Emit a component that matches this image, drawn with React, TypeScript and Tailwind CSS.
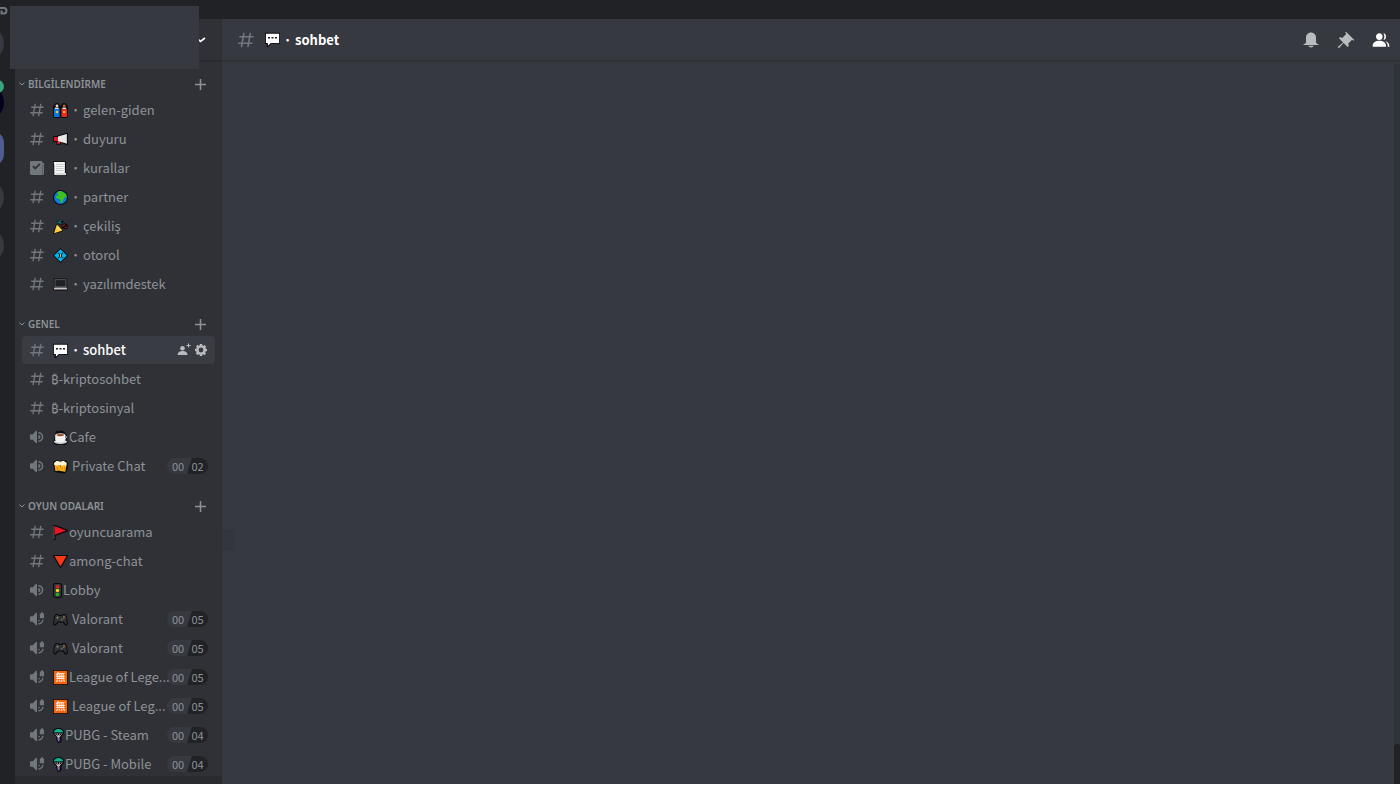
import type { ReactNode } from "react";

type EmojiName =
  | "people"
  | "megaphone"
  | "scroll"
  | "globe"
  | "party"
  | "diamond"
  | "laptop"
  | "speech"
  | "coffee"
  | "beer"
  | "flag"
  | "triangle"
  | "traffic"
  | "gamepad"
  | "kanji"
  | "parachute";

type Channel = {
  kind: "text" | "rules" | "voice" | "locked";
  emoji?: EmojiName;
  dot?: boolean;
  label: string;
  limit?: [string, string];
  active?: boolean;
};

type Category = {
  title: string;
  channels: Channel[];
};

const categories: Category[] = [
  {
    title: "BİLGİLENDİRME",
    channels: [
      { kind: "text", emoji: "people", dot: true, label: "gelen-giden" },
      { kind: "text", emoji: "megaphone", dot: true, label: "duyuru" },
      { kind: "rules", emoji: "scroll", dot: true, label: "kurallar" },
      { kind: "text", emoji: "globe", dot: true, label: "partner" },
      { kind: "text", emoji: "party", dot: true, label: "çekiliş" },
      { kind: "text", emoji: "diamond", dot: true, label: "otorol" },
      { kind: "text", emoji: "laptop", dot: true, label: "yazılımdestek" }
    ]
  },
  {
    title: "GENEL",
    channels: [
      { kind: "text", emoji: "speech", dot: true, label: "sohbet", active: true },
      { kind: "text", label: "₿-kriptosohbet" },
      { kind: "text", label: "₿-kriptosinyal" },
      { kind: "voice", emoji: "coffee", label: "Cafe" },
      { kind: "voice", emoji: "beer", label: " Private Chat", limit: ["00", "02"] }
    ]
  },
  {
    title: "OYUN ODALARI",
    channels: [
      { kind: "text", emoji: "flag", label: "oyuncuarama" },
      { kind: "text", emoji: "triangle", label: "among-chat" },
      { kind: "voice", emoji: "traffic", label: "Lobby" },
      { kind: "locked", emoji: "gamepad", label: " Valorant", limit: ["00", "05"] },
      { kind: "locked", emoji: "gamepad", label: " Valorant", limit: ["00", "05"] },
      { kind: "locked", emoji: "kanji", label: "League of Lege...", limit: ["00", "05"] },
      { kind: "locked", emoji: "kanji", label: " League of Leg...", limit: ["00", "05"] },
      { kind: "locked", emoji: "parachute", label: "PUBG - Steam", limit: ["00", "04"] },
      { kind: "locked", emoji: "parachute", label: "PUBG - Mobile", limit: ["00", "04"] }
    ]
  }
];

const emojiArt: Record<EmojiName, ReactNode> = {
  people: (
    <>
      <rect x="0" y="2" width="7.8" height="13" rx="2" fill="#0b0b0d" />
      <rect x="7.2" y="2" width="7.8" height="13" rx="2" fill="#0b0b0d" />
      <circle cx="4" cy="2.6" r="2.6" fill="#0b0b0d" />
      <circle cx="11.2" cy="2.6" r="2.6" fill="#0b0b0d" />
      <circle cx="4" cy="2.8" r="1.4" fill="#e8d9c6" />
      <circle cx="11.2" cy="2.8" r="1.4" fill="#b9653c" />
      <path d="M1 5.500h5.600V14H1z" fill="#0a78e0" />
      <path d="M8.400 5.500H14V14H8.400z" fill="#e8291c" />
      <path d="M2 4.500h3.600v1.600H2zM9.400 4.500H13v1.600H9.400z" fill="#d9dce0" />
      <circle cx="4" cy="9" r="1.300" fill="#f0c03c" />
      <circle cx="11.200" cy="9" r="1.300" fill="#f5b338" />
    </>
  ),
  megaphone: (
    <>
      <path d="M0 4.2 4.500 3.800 13.500 1h1.500v12h-1.500L8 10.800v2H3.600L3 10H0z" fill="#0b0b0d" />
      <path d="M.9 5.100h4v3.900h-4zM3.800 9.500h3.400v2.300H4.300z" fill="#e3182d" />
      <path d="M5 4.600 13.900 2v9.600L5 9.200z" fill="#e9e9ea" />
      <path d="M12.800 2.300H14v9.200h-1.200z" fill="#c4c6c9" />
    </>
  ),
  scroll: (
    <>
      <path d="M0 .3h13v11.500h1V15H1.200L.6 13.600V5H0z" fill="#0b0b0d" />
      <path d="M.9 1h11v13H1.300V3.800H.9z" fill="#f3f3f3" />
      <path d="M2.400 12h10.800v2.200H2.400z" fill="#d6d7d9" />
      <path d="M3 3.500h7.500M3 5.500h7.500M3 7.500h7.500M3 9.500h7.500" stroke="#bfc1c4" strokeWidth=".8" />
    </>
  ),
  globe: (
    <>
      <circle cx="7.500" cy="7.500" r="7.500" fill="#0b0b0d" />
      <circle cx="7.500" cy="7.500" r="6.500" fill="#0f7bd8" />
      <path d="M4 2.200Q6.500.8 8.500 1.200L13 4l.8 2.600-2.300.8-1 2-1.200 3-1.500.3-.6-3-1.700-1-2.200-.5L3 6.400 5.500 5z" fill="#3cc21c" />
    </>
  ),
  party: (
    <>
      <path d="M3.500 4.500 10.500 12 .8 15 0 14.300z" fill="#0b0b0d" />
      <path d="M3.900 5.600 9.500 11.500 1 14.300z" fill="#ffc83d" />
      <path d="M4.600 7 8.200 11l-1.500.5L4 8.800z" fill="#fbdc78" />
      <path d="M3 2.300 5.500 1.600l1-1.600L8 2.400l3-.8-1.700 3L7 6z" fill="#0b0b0d" />
      <path d="M4.300 2.800 8.500 4.500M6.700 1l.6 3" stroke="#0e8ba0" strokeWidth="1.100" />
      <path d="m8 6.500 3.600-2.500 3.800 2.200-.6 3.400-3.300.6-2.700-1.500z" fill="#0b0b0d" />
      <path d="M9.300 7.200 12 5.600M11.500 8.600l2.800-.8" stroke="#8e1a22" strokeWidth="1.300" />
    </>
  ),
  diamond: (
    <>
      <path d="M7.500 0 15 7.500 7.500 15 0 7.500z" fill="#0b0b0d" />
      <path d="M7.500 1.200 13.800 7.500 7.500 13.800 1.200 7.500z" fill="#00b7f0" />
      <path d="m4.900 4.900.9.900M10.100 4.900l-.9.900M4.900 10.100l.9-.9M10.100 10.100l-.9-.9" stroke="#0c2c3c" strokeWidth="1.100" />
      <path d="M6 5.600h3v3.800H6z" fill="#0c2c3c" />
      <path d="M7 6h1v3H7z" fill="#e8bd35" />
    </>
  ),
  laptop: (
    <>
      <path d="M.8 1.500h13.400v8.800l.8 3.200H0l.8-3.200z" fill="#0b0b0d" />
      <path d="M1.600 2.300h11.800v7.800H1.600z" fill="#66686b" />
      <path d="M2.400 3.100h10.200v6.400H2.400z" fill="#202124" />
      <path d="M1.400 10.600h12.200l.7 2H.7z" fill="#c9c2c2" />
    </>
  ),
  speech: (
    <>
      <path d="M0 .8h15v11H6.200L3.200 15H1.600v-3.200H0z" fill="#0b0b0d" />
      <path d="M.9 1.700h13.200v9.200H5.800l-2.900 2.900v-2.900h-2z" fill="#fff" />
      <path d="M3 5h2v1.600H3zM6.500 5h2v1.600h-2zM10 5h2v1.600h-2z" fill="#1c1c1e" />
    </>
  ),
  coffee: (
    <>
      <path d="M2 4 4 .6 6 1.600 8 .2l3 1.500L13 4l1.600 3-.9 2.600 1.300 2.800-2.500 2.400H2.400L0 12.300 1.400 9z" fill="#0b0b0d" />
      <ellipse cx="7.500" cy="11.800" rx="6.600" ry="2.200" fill="#d5d6d8" />
      <path d="M2.200 5h10.200v4.400l-2 2.800H4.200l-2-2.800z" fill="#f2f2f2" />
      <ellipse cx="7.300" cy="5" rx="4.900" ry="1.800" fill="#e5e2df" />
      <ellipse cx="7.300" cy="5.100" rx="3.700" ry="1.100" fill="#9a4e25" />
      <path d="M12.400 6c1.600 0 1.600 2.500-.3 2.500" stroke="#ddd" fill="none" />
    </>
  ),
  beer: (
    <>
      <path d="M0 3.200 3.600.8 7.500 2 12 1l3 3-.2 6.300L12 14.400l-5.200-.3-5.300-1z" fill="#0b0b0d" />
      <path d="M1.500 5.500 6.800 4.800l1.400 6.800-5.900.5z" fill="#f5ac1c" />
      <path d="m7.800 5.200 5.700.9-1.200 6.600-5.200-.8z" fill="#ffb91d" />
      <path d="M1 4 3.800 1.800l3.700 1 3-1L13.800 4l-.3 2.600-3-.3-2.200.5-1.700-1-3 .7L1.300 6z" fill="#fff3d4" />
      <path d="m9.500 7.500-.7 3.800M11.700 7.800 11 11.600M4 7.500l.7 3.500" stroke="#de8510" />
    </>
  ),
  flag: (
    <>
      <path d="M0 0h2.500L15 4.800v1.400L2.600 10.800V15H0z" fill="#0b0b0d" />
      <path d="M.9.8v13.400" stroke="#66686c" strokeWidth=".9" />
      <path d="M1.700 1.200 13.200 5.500 1.700 9.800z" fill="#ec1324" />
    </>
  ),
  triangle: (
    <>
      <path d="M0 1h15v1.200L8 14H7L0 2.200z" fill="#0b0b0d" />
      <path d="M1.400 2h12.200L7.500 12.600z" fill="#f43b18" />
    </>
  ),
  traffic: (
    <>
      <rect x="0" y="0" width="9" height="15" rx="2.500" fill="#0b0b0d" />
      <rect x="1" y="1" width="7" height="13" rx="1.500" fill="#35383a" />
      <circle cx="4.500" cy="3.600" r="1.700" fill="#ec1b24" />
      <circle cx="4.500" cy="7.500" r="1.700" fill="#f4d51f" />
      <circle cx="4.500" cy="11.400" r="1.700" fill="#16c60c" />
    </>
  ),
  gamepad: (
    <>
      <path d="M2.500 2h3l.8 1h2.400l.8-1h3L14 5l1 7-1.200 1.600h-1.600L9.800 10.500H5.200l-2.400 3.100H1.200L0 12l1-7z" fill="#0b0b0d" />
      <path d="M2.900 3.100h2l1 1h3.200l1-1h2L13.200 6l.7 5.600-.6 1-2.900-3.200H4.600l-2.900 3.200-.6-1L1.800 6z" fill="#303234" />
      <path d="M3 5.700h3M4.500 4.300v3" stroke="#78797a" strokeWidth=".8" />
      <circle cx="8.700" cy="7.700" r=".9" fill="#68696a" />
      <circle cx="11" cy="4.800" r=".7" fill="#a8a93c" />
      <circle cx="12" cy="6" r=".7" fill="#ac4040" />
      <circle cx="10.400" cy="6.300" r=".6" fill="#4b9c5d" />
    </>
  ),
  kanji: (
    <>
      <rect x="0" y="0" width="15" height="15" fill="#151210" />
      <rect x=".9" y=".9" width="13.200" height="13.200" fill="#f7630c" />
      <text x="7.500" y="11.300" textAnchor="middle" fontSize="10" fontWeight="500" fill="#fff6ea">
        無
      </text>
    </>
  ),
  parachute: (
    <>
      <path d="M0 3.500Q1 0 5.500 0T11 3.500v2.200L8.500 8.500v5L6.400 15H5l-1.400-2.500L3 8.400 0 5.700z" fill="#0b0b0d" />
      <path d="M.9 4.600Q1.500 1 5.500 1T10.100 4.600L7.400 4.200 5.500 4.600 3.600 4.200z" fill="#10b495" />
      <path d="M1.700 5.200 4.700 9M9.300 5.200 6.300 9M4 5l1.100 3.300M7 5 5.900 8.300" stroke="#c8cacc" strokeWidth=".7" />
      <circle cx="5.500" cy="8.600" r="1.300" fill="#d4c3bb" />
      <path d="M4.400 9.700h2.300v2.100L6 14.200 4.600 12z" fill="#8e6bc0" />
    </>
  )
};

function Emoji({ name }: { name: EmojiName }) {
  const width = name === "traffic" ? 9 : name === "parachute" ? 11 : 15;
  return (
    <svg width={width} height="15" viewBox={`0 0 ${width} 15`} className="shrink-0" aria-hidden="true">
      {emojiArt[name]}
    </svg>
  );
}

function HashIcon({ className }: { className: string }) {
  return (
    <svg viewBox="2 2 20 20" fill="currentColor" className={className} aria-hidden="true">
      <path d="M5.88657 21C5.57547 21 5.3399 20.7189 5.39427 20.4126L6.00001 17H2.59511C2.28449 17 2.04905 16.7198 2.10259 16.4138L2.27759 15.4138C2.31946 15.1746 2.52722 15 2.77011 15H6.35001L7.41001 9H4.00511C3.69449 9 3.45905 8.71977 3.51259 8.41381L3.68759 7.41381C3.72946 7.17456 3.93722 7 4.18011 7H7.76001L8.39677 3.41262C8.43914 3.17391 8.64664 3 8.88907 3H9.87344C10.1845 3 10.4201 3.28107 10.3657 3.58738L9.76001 7H15.76L16.3968 3.41262C16.4391 3.17391 16.6466 3 16.8891 3H17.8734C18.1845 3 18.4201 3.28107 18.3657 3.58738L17.76 7H21.1649C21.4755 7 21.711 7.28023 21.6574 7.58619L21.4824 8.58619C21.4406 8.82544 21.2328 9 20.9899 9H17.41L16.35 15H19.7549C20.0655 15 20.301 15.2802 20.2474 15.5862L20.0724 16.5862C20.0306 16.8254 19.8228 17 19.5799 17H16L15.3632 20.5874C15.3209 20.8261 15.1134 21 14.8709 21H13.8866C13.5755 21 13.3399 20.7189 13.3943 20.4126L14 17H8.00001L7.36325 20.5874C7.32088 20.8261 7.11337 21 6.87094 21H5.88657ZM9.41045 9L8.35045 15H14.3504L15.4104 9H9.41045Z" />
    </svg>
  );
}

function ChannelIcon({ kind }: { kind: Channel["kind"] }) {
  if (kind === "text") {
    return <HashIcon className="size-[14px] shrink-0 text-[#72767d]" />;
  }
  return (
    <svg viewBox="2 2 20 20" fill="currentColor" className="size-[14px] shrink-0 text-[#72767d]" aria-hidden="true">
      {kind === "rules" ? (
        <path fillRule="evenodd" d="M4 2h14a2 2 0 0 1 2 2v1h2v15a2 2 0 0 1-2 2H4a2 2 0 0 1-2-2V4a2 2 0 0 1 2-2Zm16 5v11a2 2 0 0 1-2 2h2.500V7H20ZM9.500 14.500l7.500-7.500-1.800-1.800-5.700 5.700-2.500-2.500-1.800 1.800 4.300 4.300Z" />
      ) : null}
      {kind === "voice" || kind === "locked" ? (
        <path d="M11.383 3.079C11.009 2.924 10.579 3.010 10.293 3.296L6 8.002H3C2.450 8.002 2 8.453 2 9.002V15.002C2 15.552 2.450 16.002 3 16.002H6L10.293 20.710C10.579 20.996 11.009 21.082 11.383 20.927C11.757 20.772 12 20.407 12 20.002V4.002C12 3.598 11.757 3.233 11.383 3.079Z" />
      ) : null}
      {kind === "voice" ? (
        <path d="M14 5v2c2.760 0 5 2.240 5 5s-2.240 5-5 5v2c3.860 0 7-3.140 7-7s-3.140-7-7-7Zm0 4v6c1.660 0 3-1.340 3-3s-1.340-3-3-3Z" />
      ) : null}
      {kind === "locked" ? (
        <path d="M17 5V4.500a2.200 2.200 0 0 1 4.400 0V5h.6v6h-6V5h1ZM14 13.500h2.200a2.200 2.200 0 0 1-2.200 2.200v-2.200Zm5.500-.5h1.800c-.2 4-3.300 7-7.300 7v-1.800c3 0 5.200-2.200 5.500-5.200Z" />
      ) : null}
    </svg>
  );
}

function UserLimit({ limit }: { limit: [string, string] }) {
  return (
    <span className="flex h-4 shrink-0 overflow-hidden rounded-full bg-[#36393f] text-[11px] leading-4 text-[#8e9297]">
      <span className="w-5 pl-0.5 text-center">{limit[0]}</span>
      <span className="w-[21px] bg-[#202225] text-center [clip-path:polygon(5px_0,100%_0,100%_100%,0_100%)]">
        {limit[1]}
      </span>
    </span>
  );
}

function InviteIcon() {
  return (
    <svg width="14" height="14" viewBox="0 0 14 14" fill="currentColor" aria-hidden="true">
      <circle cx="5.500" cy="5.200" r="2.300" />
      <path d="M.5 12c0-2.800 2.200-4 5-4s5 1.200 5 4z" />
      <path d="M11 .5h1v1.500h1.500v1H12v1.500h-1V3H9.500V2H11z" />
    </svg>
  );
}

function GearIcon() {
  return (
    <svg width="12" height="12" viewBox="2 2 20 20" fill="currentColor" aria-hidden="true">
      <path fillRule="evenodd" d="M19.738 10H22v4h-2.261a7.952 7.952 0 0 1-.967 2.330L20.371 17.929 17.543 20.757 15.943 19.157A7.959 7.959 0 0 1 14 20v2h-4v-2a7.950 7.950 0 0 1-2.330-.966L6.071 20.371 3.243 17.543 4.842 15.943A7.959 7.959 0 0 1 4 14H2v-4h2.262c.2-.824.525-1.605.967-2.329L3.630 6.072 6.458 3.243 8.057 4.842A7.959 7.959 0 0 1 10 4V2h4v2.262c.824.2 1.605.525 2.329.967L17.928 3.630 20.757 6.458 19.157 8.057c.441.723.766 1.505.967 2.329ZM12 16a4 4 0 1 0 0-8 4 4 0 0 0 0 8Z" />
    </svg>
  );
}

function ChannelRow({ channel }: { channel: Channel }) {
  return (
    <li
      className={
        channel.active
          ? "flex h-7 items-center rounded bg-[#393c43] pr-2 font-medium text-white"
          : "flex h-7 items-center rounded pr-[7px] text-[#8e9297]"
      }
    >
      <a href="#" className="relative flex min-w-0 flex-1 items-center pl-2">
        <ChannelIcon kind={channel.kind} />
        <span className={channel.emoji ? "ml-[9px] flex items-center" : "ml-[7px] flex items-center"}>
          {channel.emoji ? <Emoji name={channel.emoji} /> : null}
          {channel.dot ? <span className="w-[15px] shrink-0 text-center font-bold">·</span> : null}
          <span className={channel.emoji && !channel.dot ? "ml-px whitespace-pre" : "whitespace-pre"}>
            {channel.label}
          </span>
        </span>
      </a>
      {channel.limit ? <UserLimit limit={channel.limit} /> : null}
      {channel.active ? (
        <span className="flex items-center gap-1 text-[#b9bbbe]">
          <button type="button" aria-label="Davet Et">
            <InviteIcon />
          </button>
          <button type="button" aria-label="Kanalı Düzenle">
            <GearIcon />
          </button>
        </span>
      ) : null}
    </li>
  );
}

function CategorySection({ category }: { category: Category }) {
  return (
    <section>
      <div className="flex h-5 items-center justify-between pr-2 text-[#8e9297]">
        <button type="button" className="flex items-center gap-[3px] font-['Noto_Sans',sans-serif] text-[10px] font-semibold">
          <svg width="6" height="6" viewBox="0 0 6 6" fill="none" stroke="currentColor" aria-hidden="true">
            <path d="M.5 1.500 3 4 5.500 1.500" />
          </svg>
          {category.title}
        </button>
        <button type="button" aria-label="Kanal Oluştur">
          <svg width="13" height="13" viewBox="0 0 13 13" stroke="currentColor" strokeWidth="1.500" aria-hidden="true">
            <path d="M6.500 1v11M1 6.500h11" />
          </svg>
        </button>
      </div>
      <ul className="mt-0.5 ml-[3px] flex flex-col gap-px">
        {category.channels.map((channel, index) => (
          <ChannelRow key={index} channel={channel} />
        ))}
      </ul>
    </section>
  );
}

function ServerRail() {
  return (
    <nav className="relative w-[15px] shrink-0 overflow-hidden bg-[#202225]">
      <span className="absolute top-[7px] -left-[31px] size-[35px] rounded-full bg-[#36393f]" />
      <span className="absolute top-[66px] -left-[31px] size-[35px] rounded-full bg-[#02021e]" />
      <span className="absolute top-[61px] -left-[9px] size-[13px] rounded-full bg-[#3ba57c]" />
      <span className="absolute top-[112px] -left-[31px] size-[35px] rounded-xl bg-[#4f5d8f]" />
      <span className="absolute top-[161px] -left-[31px] size-[35px] rounded-full bg-[#36393f]" />
      <span className="absolute top-[209px] -left-[31px] size-[35px] rounded-full bg-[#36393f]" />
    </nav>
  );
}

function ChatHeader() {
  return (
    <header className="flex h-[43px] shrink-0 items-center justify-between border-b-2 border-[#2f3237] pr-[9px] pl-4">
      <h1 className="flex items-center text-[13px] font-bold text-white">
        <HashIcon className="mr-[11px] size-4 text-[#72767d]" />
        <Emoji name="speech" />
        <span className="w-[15px] text-center">·</span>
        sohbet
      </h1>
      <div className="flex items-center gap-[15px] text-[#b9bbbe]">
        <button type="button" aria-label="Bildirim Ayarları">
          <svg viewBox="0 0 24 24" fill="currentColor" className="size-5">
            <path d="M18 9v5c0 1.657 1.344 3 3 3v1H3v-1c1.656 0 3-1.343 3-3V9c0-3.314 2.686-6 6-6s6 2.686 6 6Zm-6 12c-1.452 0-2.705-.602-3.219-2h6.438c-.514 1.398-1.767 2-3.219 2Z" />
          </svg>
        </button>
        <button type="button" aria-label="Sabitlenmiş Mesajlar">
          <svg viewBox="0 0 24 24" fill="currentColor" className="size-5">
            <path d="m22 12-10-10-1 1 1 1v1L7.500 9.500 5 8.500 3.500 10l5 5L2 20.500 3.500 22l5.500-6.500 5 5 1.500-1.500-1-2.500L19 12h1l1 1z" />
          </svg>
        </button>
        <button type="button" aria-label="Üye Listesi" className="text-white">
          <svg viewBox="0 0 24 24" fill="currentColor" className="size-5">
            <path d="M14 8.006C14 10.411 12.206 12.001 10 12.001S6 10.411 6 8.006C6 5.584 7.794 4 10 4s4 1.584 4 4.006ZM2 19c0-3.533 3.290-6 8-6s8 2.467 8 6v1H2v-1Z" />
            <path d="M20 20.001h2v-1c0-2.829-2.108-4.973-5.333-5.716C18.777 14.540 20 16.531 20 19v1.001ZM14.883 11.908C16.721 11.701 18 10.151 18 8.006c0-2.162-1.268-3.788-3.117-3.995C15.590 5.070 16 6.446 16 8.006c0 1.546-.41 2.845-1.117 3.902Z" />
          </svg>
        </button>
      </div>
    </header>
  );
}

export default function App() {
  return (
    <div className="relative flex h-screen flex-col overflow-hidden border-b-4 border-white bg-[#202225] font-['Noto_Sans_CJK_JP','Noto_Sans',sans-serif] text-[13px]">
      <div className="h-[19px] shrink-0">
        <svg width="8" height="8" viewBox="0 0 8 8" className="mt-[7px]" fill="none" stroke="#72767d" strokeWidth="2" aria-hidden="true">
          <path d="M0 1h4Q6.500 1 6.500 3.700T4 6.500H1.500V3.500" />
        </svg>
      </div>
      <div className="flex min-h-0 flex-1">
        <ServerRail />
        <aside className="flex w-[207px] shrink-0 flex-col bg-[#2f3136]">
          <div className="flex h-[43px] shrink-0 items-center justify-end border-b-2 border-[#292b2f] pr-4">
            <button type="button" aria-label="Sunucu Menüsü" className="text-white">
              <svg width="9" height="9" viewBox="0 0 9 9" fill="none" stroke="currentColor" strokeWidth="1.600" aria-hidden="true">
                <path d="M1 4 3.500 6.500 8 3" />
              </svg>
            </button>
          </div>
          <div className="flex min-h-0 flex-1 flex-col gap-4 overflow-hidden pt-3 pr-[7px] pl-1">
            {categories.map((category) => (
              <CategorySection key={category.title} category={category} />
            ))}
          </div>
          <div className="h-2 shrink-0 bg-[#292b2f]" />
        </aside>
        <main className="flex min-w-0 flex-1 flex-col bg-[#36393f]">
          <ChatHeader />
          <div className="flex flex-1 justify-end pt-0.5">
            <div className="flex w-1.5 flex-col justify-end rounded-t bg-[#2e3338]">
              <div className="h-10 rounded-t bg-[#202225]" />
            </div>
          </div>
        </main>
      </div>
      <div className="absolute top-1.5 left-2.5 h-[63px] w-[189px] bg-[#36393f]" />
      <div className="absolute top-[529px] left-[222px] h-[22px] w-[13px] bg-[#33363c]" />
    </div>
  );
}
